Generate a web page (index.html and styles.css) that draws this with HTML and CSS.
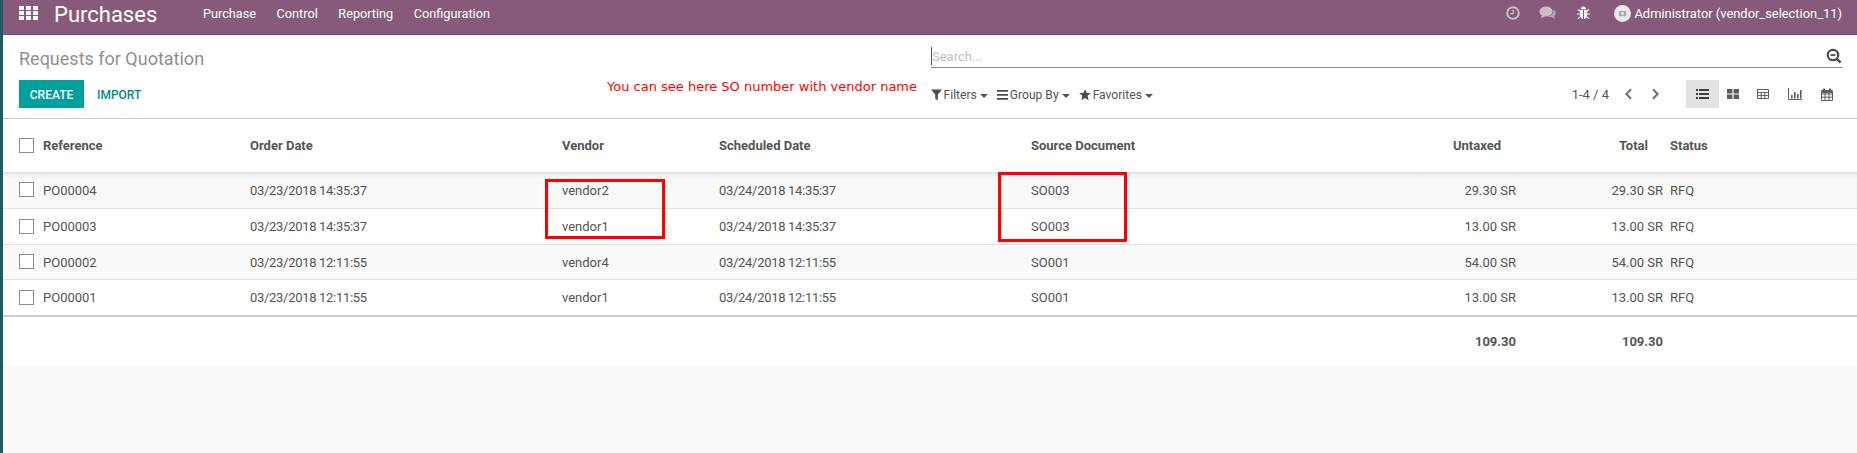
FILE: index.html
```html
<!DOCTYPE html>
<html lang="en">
<head>
<meta charset="utf-8">
<title>Requests for Quotation</title>
<link rel="stylesheet" href="styles.css">
</head>
<body>
<div class="strip"></div>
<div class="app">
  <header class="navbar">
    <div class="nav-left">
      <svg class="apps" width="19" height="14" viewBox="0 0 19 14"><g fill="#fff"><rect x="0" y="0" width="5" height="4"/><rect x="7" y="0" width="5" height="4"/><rect x="14" y="0" width="5" height="4"/><rect x="0" y="5" width="5" height="4"/><rect x="7" y="5" width="5" height="4"/><rect x="14" y="5" width="5" height="4"/><rect x="0" y="10" width="5" height="4"/><rect x="7" y="10" width="5" height="4"/><rect x="14" y="10" width="5" height="4"/></g></svg>
      <span class="brand">Purchases</span>
      <nav class="menu"><span>Purchase</span><span>Control</span><span>Reporting</span><span>Configuration</span></nav>
    </div>
    <div class="nav-right">
      <svg class="sys-clock" width="14" height="14" viewBox="0 0 14 14"><circle cx="7" cy="7" r="5.8" fill="none" stroke="#cdbcc9" stroke-width="2"/><path d="M7.2 3.6V7.6H4.4" fill="none" stroke="#cdbcc9" stroke-width="1.4"/></svg>
      <svg class="sys-chat" width="17" height="14" viewBox="0 0 17 14"><ellipse cx="7" cy="5.5" rx="6.6" ry="5" fill="#cdbcc9"/><path d="M3 8.5L2 12.5L7 9.5Z" fill="#cdbcc9"/><path d="M14.2 3.6C16 4.6 17 6 16.8 7.6C16.6 9 15.6 9.8 15.2 10.2L16 13L12.6 11C10.8 11.2 9 11 8 10.4C11.8 10.6 15.4 8 14.2 3.6Z" fill="#b9a3b4"/></svg>
      <svg class="sys-bug" width="13" height="14" viewBox="0 0 13 14"><g fill="#fff"><path d="M3.6 3.2C4 1.4 5.2 .6 6.5 .6S9 1.4 9.4 3.2Z"/><path d="M3 4H6V13C4.2 12.8 3 11 3 9Z"/><path d="M7 4H10V9C10 11 8.8 12.8 7 13Z"/></g><g stroke="#fff" stroke-width="1.1" fill="none"><path d="M3 5L.8 3.4M3 8H.2M3.4 10.6L1 12.6M10 5L12.2 3.4M10 8H12.8M9.6 10.6L12 12.6"/></g></svg>
      <span class="user">
        <svg width="17" height="17" viewBox="0 0 16 16"><circle cx="8" cy="8" r="8" fill="#e9e9e9"/><rect x="4.6" y="5.6" width="6.8" height="5" rx="1" fill="#a9a9a9"/><circle cx="8" cy="8.1" r="1.4" fill="#e9e9e9"/></svg>
        <span>Administrator (vendor_selection_11)</span>
      </span>
    </div>
  </header>

  <section class="panel">
    <h1 class="title">Requests for Quotation</h1>
    <div class="search">
      <span class="caret"></span><span class="placeholder">Search...</span>
      <svg class="search-icon" width="16" height="16" viewBox="0 0 16 16"><circle cx="7" cy="7" r="5.2" fill="none" stroke="#4c4c4c" stroke-width="2.2"/><path d="M4.6 7H9.4" stroke="#4c4c4c" stroke-width="1.8"/><path d="M10.8 10.8L14.6 14.6" stroke="#4c4c4c" stroke-width="2.6"/></svg>
    </div>
    <div class="actions"><span class="btn-create">CREATE</span><span class="btn-import">IMPORT</span></div>
    <div class="tools">
      <div class="filters">
        <span class="filter"><svg width="11" height="12" viewBox="0 0 11 12"><path d="M0 .5H11L6.8 5.6V11.5L4.2 9.8V5.6Z" fill="#4c4c4c"/></svg>Filters<i class="drop"></i></span>
        <span class="filter"><svg width="11" height="10" viewBox="0 0 11 10"><path d="M0 0H11V1.8H0ZM0 4H11V5.8H0ZM0 8H11V9.8H0Z" fill="#4c4c4c"/></svg>Group By<i class="drop"></i></span>
        <span class="filter"><svg width="12" height="12" viewBox="0 0 12 12"><path d="M6 .3L7.7 4H11.8L8.6 6.8L9.6 11.3L6 8.9L2.4 11.3L3.4 6.8L.2 4H4.3Z" fill="#4c4c4c"/></svg>Favorites<i class="drop"></i></span>
      </div>
      <div class="right-tools">
        <span class="pager-text">1-4 / 4</span>
        <svg class="chev-l" width="9" height="12" viewBox="0 0 9 12"><path d="M7 1.2L2.4 6L7 10.8" fill="none" stroke="#777" stroke-width="2.2"/></svg>
        <svg class="chev-r" width="9" height="12" viewBox="0 0 9 12"><path d="M2 1.2L6.6 6L2 10.8" fill="none" stroke="#777" stroke-width="2.2"/></svg>
        <div class="views">
          <span class="view active"><svg width="13" height="10" viewBox="0 0 13 10"><path d="M0 0H2V2H0ZM3 0H13V2H3ZM0 4H2V6H0ZM3 4H13V6H3ZM0 8H2V10H0ZM3 8H13V10H3Z" fill="#3c3c3c"/></svg></span>
          <span class="view"><svg width="12" height="10" viewBox="0 0 12 10"><path d="M0 0H5.4V4.4H0ZM6.6 0H12V4.4H6.6ZM0 5.6H5.4V10H0ZM6.6 5.6H12V10H6.6Z" fill="#5c5c5c"/></svg></span>
          <span class="view"><svg width="12" height="10" viewBox="0 0 12 10"><path d="M.5 .5H11.5V9.5H.5ZM.5 3.4H11.5M.5 6.4H11.5M4.2 3.4V9.5M7.8 3.4V9.5" fill="none" stroke="#5c5c5c"/></svg></span>
          <span class="view"><svg width="14" height="12" viewBox="0 0 14 12"><path d="M.5 0V11.5H14" fill="none" stroke="#5c5c5c"/><path d="M3 7H4.6V10.4H3ZM6 4H7.6V10.4H6ZM9 6H10.6V10.4H9ZM12 2H13.6V10.4H12Z" fill="#5c5c5c"/></svg></span>
          <span class="view"><svg width="12" height="13" viewBox="0 0 12 13"><path d="M.5 3H11.5V12.5H.5ZM.5 6H11.5M.5 9.2H11.5M4 3V12.5M8 3V12.5" fill="none" stroke="#5c5c5c"/><path d="M2 .5H4V3.5H2ZM8 .5H10V3.5H8ZM.5 2H11.5V5H.5Z" fill="#5c5c5c"/></svg></span>
        </div>
      </div>
    </div>
    <p class="note">You can see here SO number with vendor name</p>
  </section>

  <main class="content">
    <table class="list">
      <colgroup>
        <col class="c-check"><col class="c-ref"><col class="c-date"><col class="c-vendor"><col class="c-date2"><col class="c-source"><col class="c-untaxed"><col class="c-total"><col class="c-status">
      </colgroup>
      <thead>
        <tr><th class="chk"><span class="box"></span></th><th>Reference</th><th>Order Date</th><th>Vendor</th><th>Scheduled Date</th><th>Source Document</th><th class="num">Untaxed</th><th class="num">Total</th><th class="st">Status</th></tr>
      </thead>
      <tbody>
        <tr><td class="chk"><span class="box"></span></td><td>PO00004</td><td class="when">03/23/2018 14:35:37</td><td>vendor2</td><td class="when">03/24/2018 14:35:37</td><td>SO003</td><td class="num">29.30 SR</td><td class="num">29.30 SR</td><td class="st">RFQ</td></tr>
        <tr><td class="chk"><span class="box"></span></td><td>PO00003</td><td class="when">03/23/2018 14:35:37</td><td>vendor1</td><td class="when">03/24/2018 14:35:37</td><td>SO003</td><td class="num">13.00 SR</td><td class="num">13.00 SR</td><td class="st">RFQ</td></tr>
        <tr><td class="chk"><span class="box"></span></td><td>PO00002</td><td class="when">03/23/2018 12:11:55</td><td>vendor4</td><td class="when">03/24/2018 12:11:55</td><td>SO001</td><td class="num">54.00 SR</td><td class="num">54.00 SR</td><td class="st">RFQ</td></tr>
        <tr><td class="chk"><span class="box"></span></td><td>PO00001</td><td class="when">03/23/2018 12:11:55</td><td>vendor1</td><td class="when">03/24/2018 12:11:55</td><td>SO001</td><td class="num">13.00 SR</td><td class="num">13.00 SR</td><td class="st">RFQ</td></tr>
      </tbody>
      <tfoot>
        <tr><td colspan="6"></td><td class="num">109.30</td><td class="num">109.30</td><td></td></tr>
      </tfoot>
    </table>
  </main>
</div>
<div class="mark mark-vendor"></div>
<div class="mark mark-source"></div>
</body>
</html>
```
FILE: styles.css
```css
* { box-sizing: border-box; }
html, body { height: 100%; }
body {
  margin: 0;
  display: flex;
  overflow: hidden;
  font-family: Roboto, "Liberation Sans", sans-serif;
  font-size: 13px;
  color: #555;
  background: #fff;
}
.strip { width: 3px; flex: none; background: #1a5c63; }
.app { flex: 1; min-width: 0; display: flex; flex-direction: column; }

.navbar {
  height: 35px;
  flex: none;
  background: #875a7b;
  border-bottom: 1px solid #6f4a66;
  display: flex;
  justify-content: space-between;
  align-items: center;
  color: #fff;
  padding: 0 15px 0 16px;
}
.nav-left, .nav-right { display: flex; align-items: center; }
.apps { margin: -8px 16px 0 0; }
.brand { font-size: 22px; line-height: 28px; width: 149px; margin-top: -4px; }
.menu { display: flex; gap: 20.6px; margin-top: -8px; font-size: 12.7px; }
.nav-right { margin-top: -8px; }
.sys-clock { margin-right: 19px; }
.sys-chat { margin-right: 21px; }
.sys-bug { margin-right: 24px; }
.user { display: flex; align-items: center; gap: 3px; font-size: 12.9px; }

.panel {
  position: relative;
  display: grid;
  grid-template-columns: 928px 1fr;
  grid-template-rows: 45px 28px;
  height: 84px;
  padding: 0 15px 0 0;
  border-bottom: 1px solid #ccc;
  flex: none;
}
.title {
  margin: 0;
  padding: 13px 0 0 16px;
  font-size: 18px;
  line-height: 22px;
  font-weight: 400;
  color: #8f8f8f;
}
.search {
  align-self: start;
  margin-top: 10px;
  height: 23px;
  border-bottom: 1px solid #888;
  display: flex;
  align-items: center;
  position: relative;
}
.caret { width: 1px; height: 18px; background: #555; }
.placeholder { color: #bdbdbd; font-size: 13px; }
.search-icon { position: absolute; right: 0; top: 3px; }

.actions { display: flex; align-items: center; padding-left: 16px; }
.btn-create {
  background: #00a09d;
  color: #fff;
  width: 65px;
  height: 28px;
  line-height: 30px;
  text-align: center;
  font-size: 12px;
  font-weight: 500;
}
.btn-import { color: #00888a; font-size: 12px; font-weight: 500; margin: 1px 0 0 13px; }

.tools { display: flex; justify-content: space-between; align-items: center; padding-top: 1px; }
.filters { display: flex; gap: 9px; font-size: 12.1px; }
.filter { display: flex; align-items: center; gap: 1.5px; }
.drop {
  display: inline-block;
  margin-left: 2px;
  border-top: 4px solid #555;
  border-left: 4px solid transparent;
  border-right: 4px solid transparent;
  margin-top: 2px;
}
.right-tools { display: flex; align-items: center; margin: -1px -1px 0 0; }
.pager-text { margin-right: 15px; }
.chev-l { margin-right: 18px; }
.chev-r { margin-right: 26px; }
.views { display: flex; align-items: center; }
.view {
  width: 32px;
  height: 28px;
  display: flex;
  align-items: center;
  justify-content: center;
}
.view.active { width: 33px; background: #e2e2e2; }
.view.active + .view { width: 28px; }
.note {
  position: absolute;
  left: 604px;
  top: 44px;
  margin: 0;
  color: #f00;
  font-family: "DejaVu Sans", sans-serif;
  font-size: 13px;
  line-height: 16px;
}

.content { flex: 1; background: #f9f9f9; }
.list { width: 100%; table-layout: fixed; border-collapse: collapse; background: #fff; }
.c-check { width: 40px; }
.c-ref { width: 207px; }
.c-date { width: 312px; }
.c-vendor { width: 157px; }
.c-date2 { width: 312px; }
.c-source { width: 389px; }
.c-untaxed { width: 96px; }
.c-total { width: 147px; }
.list th, .list td { padding: 0; text-align: left; }
.list th { height: 53px; font-weight: 700; font-size: 13px; }
.list th.num { padding-right: 15px; }
.list .num { text-align: right; }
.list .st { padding-left: 7px; }
.list .chk { padding-left: 16px; }
.box {
  display: block;
  width: 15px;
  height: 15px;
  border: 1px solid #8c8c8c;
  background: #fff;
}
.when { letter-spacing: -.3px; }
tbody td { height: 36px; border-bottom: 1px solid #e2e2e2; }
.list tbody td:not(.chk) { padding-top: 1px; }
tbody tr:nth-child(odd) td { background: #f9f9f9; }
tbody tr:first-child td { box-shadow: inset 0 5px 5px -4px rgba(0, 0, 0, .16); }
tbody tr:nth-child(3) td { height: 35px; }
tbody tr:last-child td { border-bottom: 2px solid #cfcfcf; height: 37px; }
tfoot td { height: 49px; font-weight: 700; }

.mark { position: absolute; border: 3px solid #f00; pointer-events: none; }
.mark-vendor { left: 545px; top: 179px; width: 120px; height: 60px; }
.mark-source { left: 998px; top: 172px; width: 129px; height: 70px; }
```
